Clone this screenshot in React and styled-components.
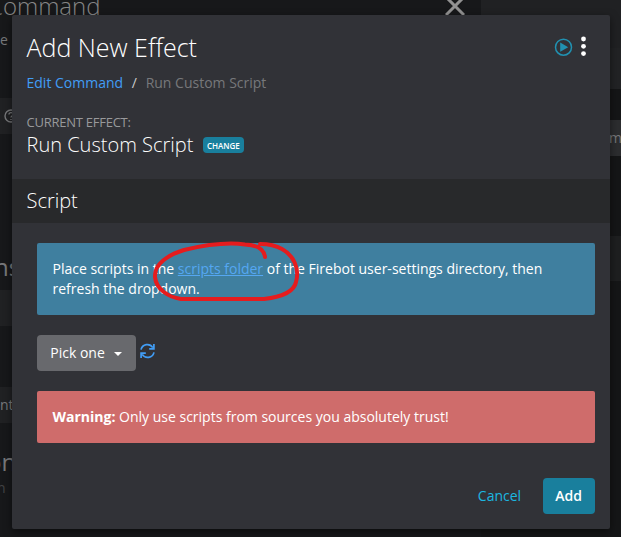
import React from 'react';
import styled, { createGlobalStyle } from 'styled-components';

const Global = createGlobalStyle`
  * { box-sizing: border-box; }
  html, body { margin: 0; overflow: hidden; background: #17181a; }
  body { font-family: "Open Sans", "Noto Sans", sans-serif; font-size: 14px; line-height: 20px; color: #fff; }
  h1, h2, h3, p { margin: 0; font-weight: 300; }
`;

const Screen = styled.div`
  position: relative;
  display: flex;
  width: 621px;
  height: 537px;
  overflow: hidden;
`;
const BackPanel = styled.div`
  width: 481px;
  flex: none;
  background: #17181a;
`;
const BackSide = styled.div`
  flex: 1;
  background: #151617;
`;
const Band = styled.div`
  display: flex;
  align-items: ${(p) => p.$align || 'center'};
  height: ${(p) => p.$h}px;
  padding-left: ${(p) => p.$pad || 0}px;
  background: ${(p) => p.$bg || 'transparent'};
  color: ${(p) => p.$color || '#77787a'};
  font-size: ${(p) => p.$size || 14}px;
  line-height: 1;
  overflow: hidden;
  white-space: nowrap;
`;
const Shift = styled.span`
  margin-left: ${(p) => p.$x}px;
  margin-top: ${(p) => p.$y || 0}px;
`;
const TitleBar = styled(Band)`
  font-weight: 300;
  justify-content: space-between;
  padding-right: 16px;
  color: #858585;
`;

const Modal = styled.main`
  position: absolute;
  left: 12px;
  top: 15px;
  width: 598px;
  height: 514px;
  display: flex;
  flex-direction: column;
  background: #313237;
  border-radius: 2px;
  box-shadow: 0 3px 9px rgba(0, 0, 0, 0.5);
`;
const Header = styled.header`
  display: flex;
  justify-content: space-between;
  height: 92px;
  padding: 16px 22px 0 14.5px;
`;
const Title = styled.h1`
  font-size: 25px;
  line-height: 32px;
`;
const Crumbs = styled.nav`
  display: flex;
  gap: 8.7px;
  margin-top: 10px;
  color: #77787b;
`;
const Slash = styled.span`
  color: #ccc;
`;
const Link = styled.a`
  color: ${(p) => (p.$underline ? '#55a7f2' : '#419df5')};
  text-decoration: ${(p) => (p.$underline ? 'underline' : 'none')};
`;
const Tools = styled.div`
  display: flex;
  align-items: flex-start;
  gap: 6px;
  padding-top: 5px;
`;
const Current = styled.section`
  height: 72px;
  padding: 5px 14.5px 0;
`;
const Label = styled.div`
  font-size: 13px;
  line-height: 20px;
  letter-spacing: -0.25px;
  color: #98999b;
`;
const EffectRow = styled.div`
  display: flex;
  align-items: center;
  gap: 9.5px;
  height: 26px;
  font-size: 20px;
  font-weight: 300;
`;
const Badge = styled.span`
  height: 16px;
  width: 41px;
  border-radius: 4px;
  background: #197f9d;
  font-size: 8px;
  font-weight: 600;
  line-height: 17px;
  text-align: center;
`;
const SectionTitle = styled.h2`
  height: 44px;
  padding-left: 14.5px;
  background: #28292b;
  font-size: 20px;
  line-height: 43px;
`;
const Body = styled.section`
  display: flex;
  flex-direction: column;
  gap: 20px;
  padding: 20px 15px 0 25px;
`;
const Alert = styled.div`
  padding: 16px 15px 16px 15.5px;
  border-radius: 2px;
  background: ${(p) => (p.$danger ? '#cf6c6b' : '#3f7f9f')};
`;
const PickRow = styled.div`
  display: flex;
  gap: 4px;
`;
const Button = styled.button`
  display: flex;
  align-items: center;
  justify-content: center;
  gap: 9px;
  width: ${(p) => p.$w}px;
  height: 36px;
  padding: 0 1px 0 0;
  border: 0;
  border-radius: 4px;
  background: ${(p) => p.$bg || 'transparent'};
  color: ${(p) => p.$color || '#fff'};
  font: ${(p) => p.$weight || 400} 14px/20px "Open Sans", "Noto Sans", sans-serif;
`;
const Caret = styled.span`
  margin-top: 1px;
  border: 4px solid transparent;
  border-top-color: #fff;
  border-bottom: 0;
`;
const Refresh = styled.svg`
  margin-top: 8px;
`;
const Footer = styled.footer`
  display: flex;
  justify-content: flex-end;
  gap: 6px;
  padding: 35px 15px 0;
`;
const Marker = styled.svg`
  position: absolute;
  left: 144.5px;
  top: 235px;
  pointer-events: none;
`;

export default function App() {
  return (
    <>
      <Global />
      <Screen>
        <BackPanel>
          <TitleBar $h={30} $size={24} $align="flex-start">
            <Shift $x={-12} $y={-6}>Command</Shift>
            <svg width="20" height="20" viewBox="0 0 20 20" stroke="#929292" strokeWidth="3">
              <path d="M1 -3 L19 15 M19 -3 L1 15" />
            </svg>
          </TitleBar>
          <Band $h={20}>e</Band>
          <Band $h={48} />
          <Band $h={36} $bg="#202123" $pad={4}>
            <svg width="14" height="14" viewBox="0 0 14 14" fill="none" stroke="#77787a" strokeWidth="1.4">
              <circle cx="7" cy="7" r="6" />
              <path d="M5 5.5 C5 3 9 3 9 5.5 C9 7 7 7 7 8.5 M7 10 V11" />
            </svg>
          </Band>
          <Band $h={116} />
          <Band $h={40} $size={24} $align="flex-start"><Shift $x={-6} $y={5}>ns</Shift></Band>
          <Band $h={36} $bg="#202123" />
          <Band $h={61} />
          <Band $h={36} $bg="#202123">nt</Band>
          <Band $h={51} $size={24} $align="flex-end"><Shift $x={-13}>on</Shift></Band>
          <Band $h={28} $color="#424345"><Shift $x={-3}>n</Shift></Band>
        </BackPanel>
        <BackSide>
          <Band $h={48} $bg="#202123" />
          <Band $h={41} $bg="#222325" />
          <Band $h={31} />
          <Band $h={36} $bg="#2c2d2f" $pad={128}>mi</Band>
          <Band $h={80} />
          <Band $h={45} $bg="#1e1f20" />
          <Band $h={256} />
        </BackSide>

        <Modal>
          <Header>
            <div>
              <Title>Add New Effect</Title>
              <Crumbs>
                <Link>Edit Command</Link>
                <Slash>/</Slash>
                <span>Run Custom Script</span>
              </Crumbs>
            </div>
            <Tools>
              <svg width="19" height="22" viewBox="0 0 19 22">
                <circle cx="9.5" cy="11.2" r="8" fill="none" stroke="#2191b1" strokeWidth="1.5" />
                <path d="M6.2 6.6 L14.2 11.2 L6.2 15.8 Z" fill="#2191b1" />
              </svg>
              <svg width="9" height="22" viewBox="0 0 9 22" fill="#fff">
                <circle cx="4.5" cy="3" r="2.4" />
                <circle cx="4.5" cy="10.3" r="2.4" />
                <circle cx="4.5" cy="17.6" r="2.4" />
              </svg>
            </Tools>
          </Header>
          <Current>
            <Label>CURRENT EFFECT:</Label>
            <EffectRow>
              <span>Run Custom Script</span>
              <Badge>CHANGE</Badge>
            </EffectRow>
          </Current>
          <SectionTitle>Script</SectionTitle>
          <Body>
            <Alert>
              Place scripts in the <Link $underline>scripts folder</Link> of the Firebot user-settings directory, then refresh the dropdown.
            </Alert>
            <PickRow>
              <Button $w={99} $bg="#68696d">Pick one <Caret /></Button>
              <Refresh width="15" height="16" viewBox="0 0 15 16" fill="none" stroke="#419df5" strokeWidth="1.7">
                <path d="M1 6.6 A6.5 6.5 0 0 1 12.8 4.6 M13.9 1 V5.8 H9.2 M14 9.4 A6.5 6.5 0 0 1 2.2 11.4 M1.1 15 V10.2 H5.8" />
              </Refresh>
            </PickRow>
            <Alert $danger><strong>Warning:</strong> Only use scripts from sources you absolutely trust!</Alert>
          </Body>
          <Footer>
            <Button $w={74} $color="#1cb7e0">Cancel</Button>
            <Button $w={52} $bg="#197f9d" $weight={600}>Add</Button>
          </Footer>
        </Modal>

        <Marker width="160" height="75" viewBox="0 0 160 75" fill="none" stroke="#e51c1e" strokeWidth="4" strokeLinecap="round" strokeLinejoin="round">
          <path d="M120 22 C119 14 112 10 100 9.5 C82 7 56 11 39 15 C23 20 9 29 10 42 C11 54 23 62 36 64 H119 C136 62 149 57 151 47 C155 33 148 20 137 14 C130 10 122 9 115 9" />
        </Marker>
      </Screen>
    </>
  );
}
